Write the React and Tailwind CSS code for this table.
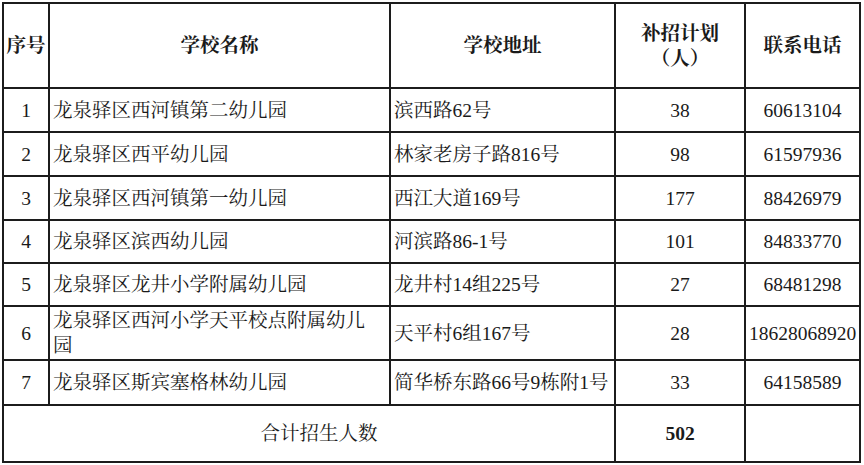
const rows = [
    { no: 1, name: '龙泉驿区西河镇第二幼儿园', addr: '滨西路62号', plan: 38, tel: '60613104', h: 'h-[44px]' },
    { no: 2, name: '龙泉驿区西平幼儿园', addr: '林家老房子路816号', plan: 98, tel: '61597936', h: 'h-[44px]' },
    { no: 3, name: '龙泉驿区西河镇第一幼儿园', addr: '西江大道169号', plan: 177, tel: '88426979', h: 'h-[44px]' },
    { no: 4, name: '龙泉驿区滨西幼儿园', addr: '河滨路86-1号', plan: 101, tel: '84833770', h: 'h-[43px]' },
    { no: 5, name: '龙泉驿区龙井小学附属幼儿园', addr: '龙井村14组225号', plan: 27, tel: '68481298', h: 'h-[43px]' },
    { no: 6, name: '龙泉驿区西河小学天平校点附属幼儿园', addr: '天平村6组167号', plan: 28, tel: '18628068920', h: 'h-[54px]' },
    { no: 7, name: '龙泉驿区斯宾塞格林幼儿园', addr: '简华桥东路66号9栋附1号', plan: 33, tel: '64158589', h: 'h-[45px]' },
];

const cell = 'border-2 border-[#1c1c1c] p-0 align-middle';

const App = () => {
    return (
        <div className="w-[864px] h-[465px] bg-white pt-[2px] pl-[2px] text-[#1a1a1a] font-['Liberation_Serif','Noto_Serif_CJK_SC','Noto_Sans_CJK_SC',serif] text-[19.5px] leading-[25px]">
            <table className="w-[859px] table-fixed border-collapse">
                <colgroup>
                    <col className="w-[46px]" />
                    <col className="w-[341px]" />
                    <col className="w-[225px]" />
                    <col className="w-[130px]" />
                    <col className="w-[115px]" />
                </colgroup>
                <thead>
                    <tr className="h-[85px] font-bold">
                        <th className={`${cell} text-center`}>序号</th>
                        <th className={`${cell} text-center`}>学校名称</th>
                        <th className={`${cell} text-center`}>学校地址</th>
                        <th className={`${cell} text-center`}>
                            <div>补招计划</div>
                            <div>（人）</div>
                        </th>
                        <th className={`${cell} text-center`}>联系电话</th>
                    </tr>
                </thead>
                <tbody>
                    {rows.map(r => (
                        <tr key={r.no} className={r.h}>
                            <td className={`${cell} text-center`}>{r.no}</td>
                            <td className={`${cell} pl-[3px] pr-[12px] text-left`}>{r.name}</td>
                            <td className={`${cell} px-[3px] text-left whitespace-nowrap`}>{r.addr}</td>
                            <td className={`${cell} text-center`}>{r.plan}</td>
                            <td className={`${cell} text-center whitespace-nowrap`}>{r.tel}</td>
                        </tr>
                    ))}
                    <tr className="h-[57px]">
                        <td colSpan={3} className={`${cell} pl-[20px] text-center`}>合计招生人数</td>
                        <td className={`${cell} text-center font-bold`}>502</td>
                        <td className={cell}></td>
                    </tr>
                </tbody>
            </table>
        </div>
    );
};

export default App;
